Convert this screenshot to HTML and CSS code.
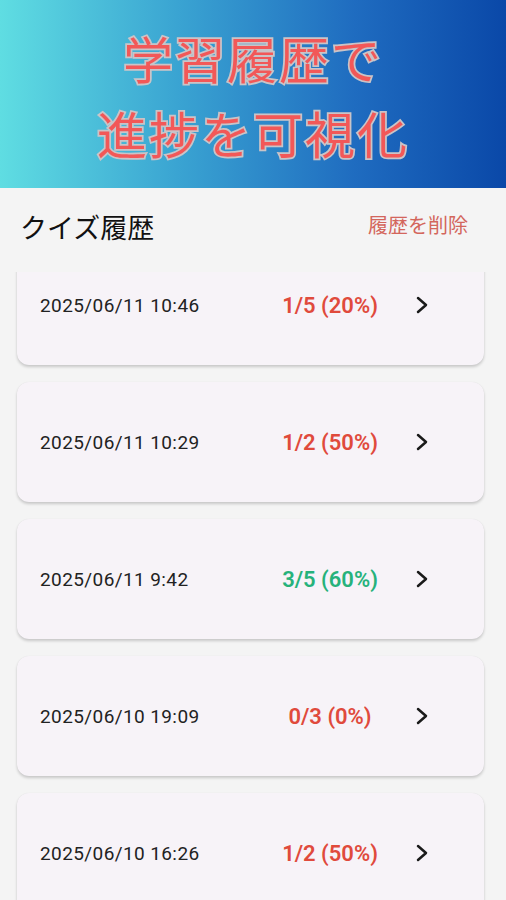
FILE: index.html
```html
<!DOCTYPE html>
<html lang="ja">
<head>
    <meta charset="UTF-8">
    <meta name="viewport" content="width=device-width, initial-scale=1.0">
    <title>クイズ履歴</title>
    <link rel="stylesheet" href="styles.css">
</head>
<body>
    <div class="banner">
        <p class="banner-line">学習履歴で</p>
        <p class="banner-line">進捗を可視化</p>
    </div>

    <div class="top-row">
        <h1 class="title">クイズ履歴</h1>
        <button class="clear-btn" type="button">履歴を削除</button>
    </div>

    <div class="list-wrap">
        <div class="list">
            <div class="card">
                <span class="date">2025/06/11 10:46</span>
                <span class="score bad">1/5 (20%)</span>
                <svg class="chev" viewBox="0 0 14 18" width="14" height="18"><path d="M3 2l8 7-8 7"/></svg>
            </div>
            <div class="card">
                <span class="date">2025/06/11 10:29</span>
                <span class="score bad">1/2 (50%)</span>
                <svg class="chev" viewBox="0 0 14 18" width="14" height="18"><path d="M3 2l8 7-8 7"/></svg>
            </div>
            <div class="card">
                <span class="date">2025/06/11 9:42</span>
                <span class="score good">3/5 (60%)</span>
                <svg class="chev" viewBox="0 0 14 18" width="14" height="18"><path d="M3 2l8 7-8 7"/></svg>
            </div>
            <div class="card">
                <span class="date">2025/06/10 19:09</span>
                <span class="score bad">0/3 (0%)</span>
                <svg class="chev" viewBox="0 0 14 18" width="14" height="18"><path d="M3 2l8 7-8 7"/></svg>
            </div>
            <div class="card">
                <span class="date">2025/06/10 16:26</span>
                <span class="score bad">1/2 (50%)</span>
                <svg class="chev" viewBox="0 0 14 18" width="14" height="18"><path d="M3 2l8 7-8 7"/></svg>
            </div>
        </div>
    </div>
</body>
</html>
```

FILE: styles.css
```css
body {
    margin: 0;
    padding: 0;
    background-color: #f4f4f4;
    font-family: Roboto, "Noto Sans CJK JP", sans-serif;
    height: 900px;
    overflow: hidden;
    display: flex;
    flex-direction: column;
}

.banner {
    height: 188px;
    background: linear-gradient(90deg, #5fdde2 0%, #3aa4d2 35%, #1f6cc0 70%, #0a48a8 100%);
    display: flex;
    flex-direction: column;
    align-items: center;
    justify-content: center;
    padding-top: 2px;
    box-sizing: border-box;
    flex-shrink: 0;
}
.banner-line {
    margin: 0;
    font-family: "Noto Sans CJK JP", sans-serif;
    font-size: 50px;
    font-weight: 400;
    line-height: 75px;
    letter-spacing: 2px;
    color: #f25858;
    -webkit-text-stroke: 3.5px #c9c4c8;
    paint-order: stroke fill;
}

.top-row {
    height: 84px;
    display: flex;
    align-items: center;
    justify-content: space-between;
    padding: 0 38px 0 20px;
    flex-shrink: 0;
}
.title {
    margin: 0;
    font-family: "Noto Sans CJK JP", sans-serif;
    font-size: 27px;
    font-weight: 400;
    color: #111;
    padding-bottom: 8px;
}
.clear-btn {
    border: none;
    background: none;
    padding: 0;
    font-family: "Noto Sans CJK JP", sans-serif;
    font-size: 20px;
    color: #d3665c;
    margin-bottom: 12px;
}

.list-wrap {
    flex: 1;
    overflow: hidden;
}
.list {
    margin-top: -27px;
    padding: 0 22px 0 17px;
    display: flex;
    flex-direction: column;
    gap: 17px;
}
.card {
    height: 120px;
    background-color: #f7f3f8;
    border-radius: 12px;
    box-shadow: 0 2px 3px rgba(0, 0, 0, 0.18), 0 0 1px rgba(0, 0, 0, 0.08);
    display: grid;
    grid-template-columns: 230px 120px 1fr;
    align-items: center;
    padding-left: 23px;
}
.date {
    font-size: 19px;
    color: #222;
    letter-spacing: 0.4px;
}
.score {
    font-size: 22px;
    font-weight: 600;
    text-align: center;
}
.bad {
    color: #e04a3c;
}
.good {
    color: #26b27b;
}
.chev {
    margin-left: 25px;
    fill: none;
    stroke: #1a1a1a;
    stroke-width: 2.5;
    stroke-linecap: round;
    stroke-linejoin: round;
}
```
